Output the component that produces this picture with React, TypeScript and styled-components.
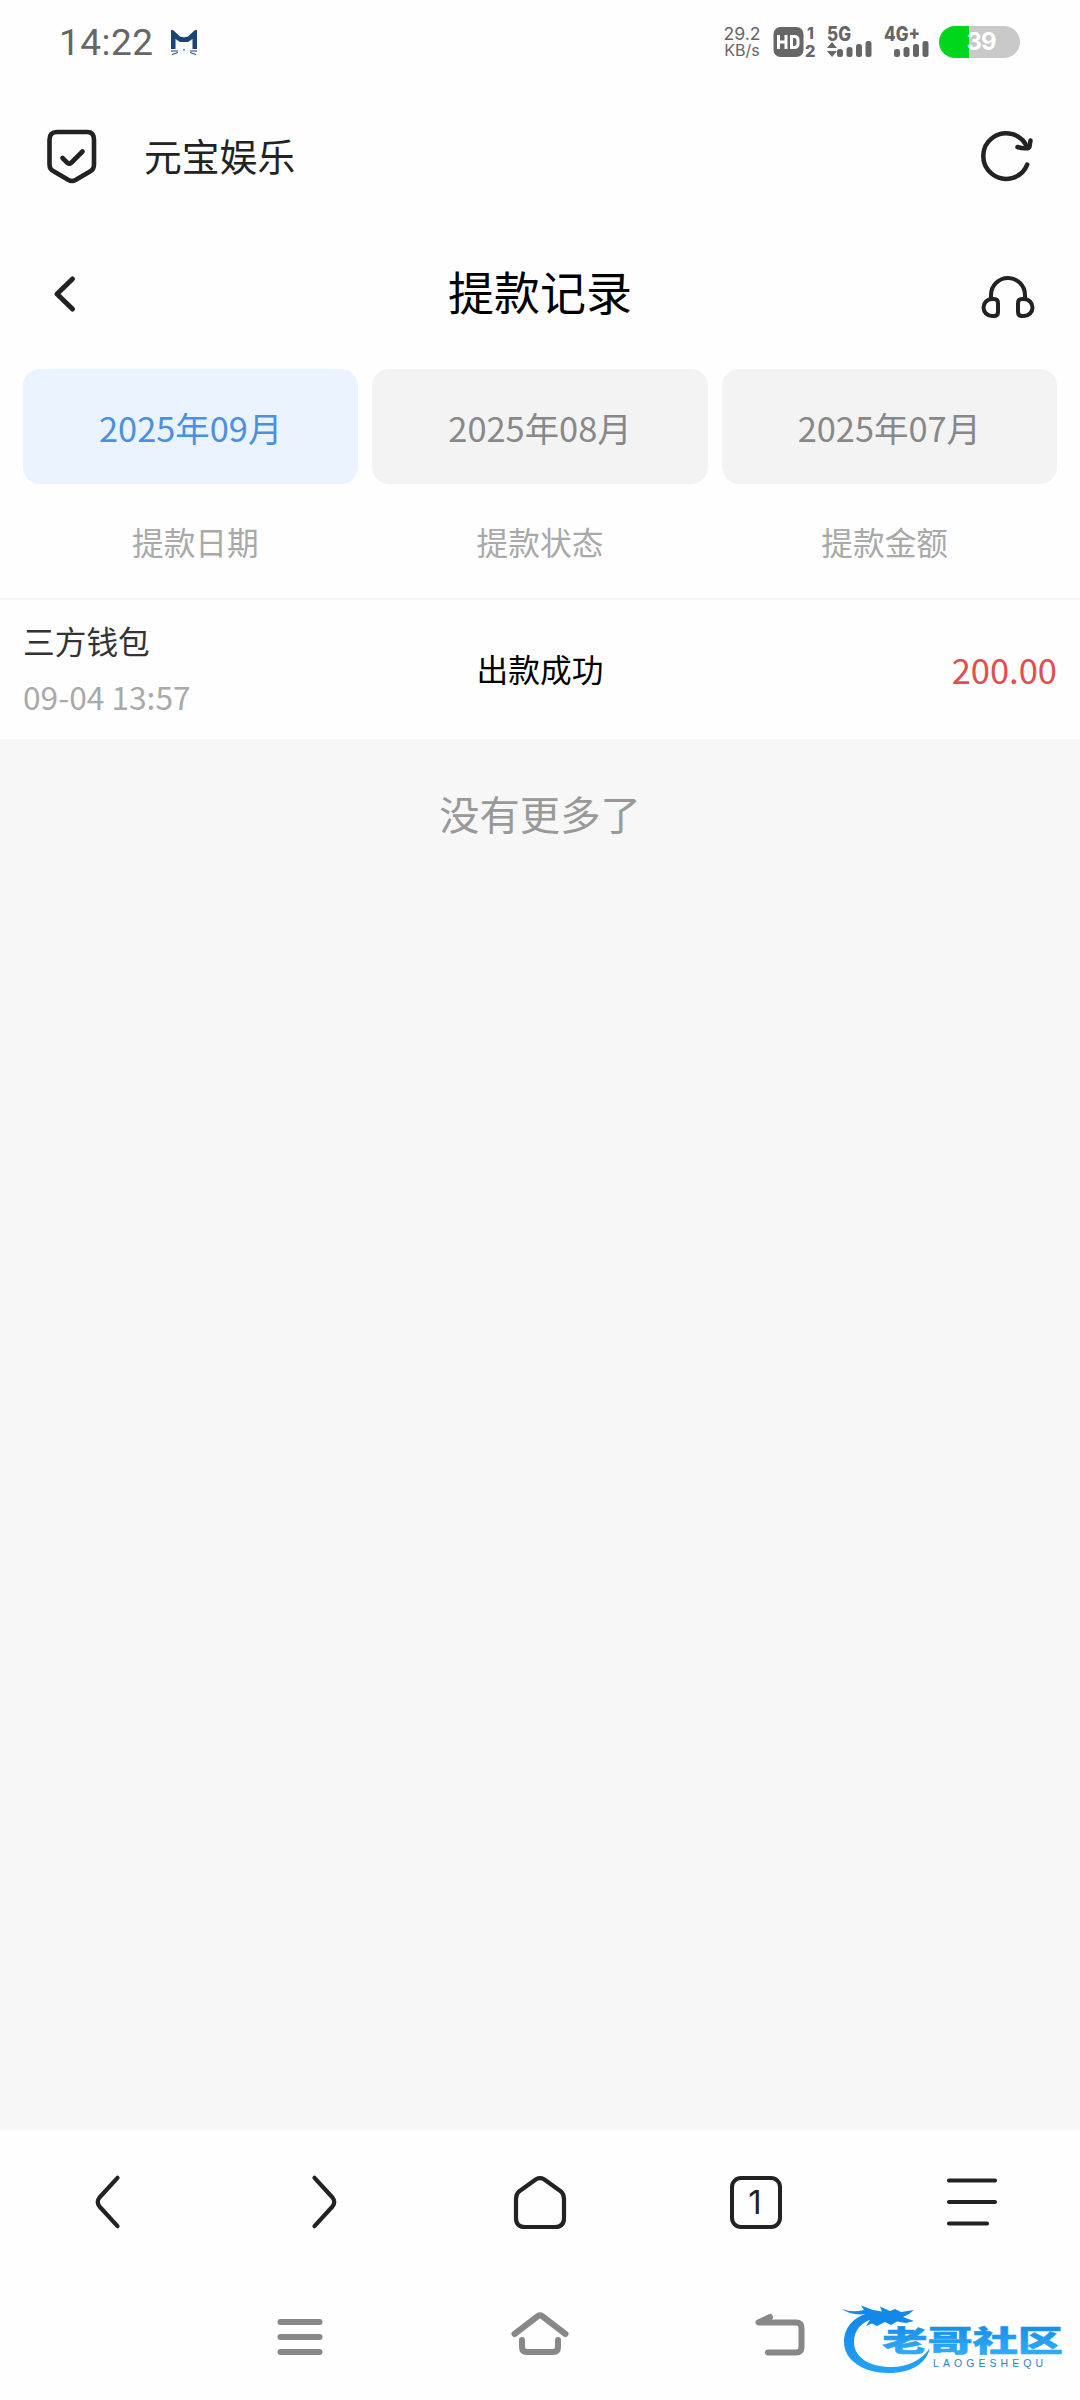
import React from 'react';
import styled, { createGlobalStyle } from 'styled-components';

const Global = createGlobalStyle`
  * { box-sizing: border-box; }
  body { margin: 0; background: #fff; }
`;

const Screen = styled.div`
  width: 1080px;
  height: 2400px;
  display: flex;
  flex-direction: column;
  overflow: hidden;
  background: #fefefe;
  font-family: "Noto Sans CJK SC", sans-serif;
  color: #222;
`;

const StatusBar = styled.header`
  height: 84px;
  padding: 0 60px 0 59px;
  display: flex;
  justify-content: space-between;
  font-family: Roboto, sans-serif;
  color: #666;
`;

const StatusGroup = styled.div`
  display: flex;
  align-items: center;
  height: 84px;
`;

const Clock = styled.span`
  font-size: 37px;
  line-height: 40px;
  letter-spacing: 0.5px;
  padding-top: 2px;
  margin-right: 16px;
`;

const Speed = styled.div`
  display: flex;
  flex-direction: column;
  align-items: center;
  width: 38px;
  margin: 0 12px 0 0;
  font-family: Inter, sans-serif;
  font-size: 17.6px;
  line-height: 17px;
  white-space: nowrap;
`;

const SpeedUnit = styled.span`
  font-size: 16px;
`;

const BrowserBar = styled.div`
  height: 145px;
  padding: 0 45px 1px 45px;
  display: flex;
  align-items: center;
`;

const SiteName = styled.span`
  flex: 1;
  margin-left: 45px;
  padding-bottom: 3px;
  font-size: 37.8px;
  line-height: 48px;
`;

const PageHeader = styled.div`
  height: 140px;
  padding: 0 44px 12px 48px;
  display: grid;
  grid-template-columns: 1fr auto 1fr;
  align-items: center;
`;

const HeaderAction = styled.div<{ $end?: boolean }>`
  display: flex;
  justify-content: ${(p) => (p.$end ? 'flex-end' : 'flex-start')};
  padding-top: ${(p) => (p.$end ? '7px' : '2px')};
`;

const PageTitle = styled.h1`
  margin: 0;
  padding: 0 4px 7px 0;
  font-size: 46px;
  line-height: 60px;
  font-weight: 400;
  color: #000;
`;

const Months = styled.div`
  padding: 0 23px;
  display: grid;
  grid-template-columns: repeat(3, 1fr);
  gap: 14px;
`;

const Month = styled.button<{ $active?: boolean }>`
  height: 115px;
  padding: 1px 0 0;
  border: 0;
  border-radius: 17px;
  font: 34.4px "Noto Sans CJK SC", sans-serif;
  color: ${(p) => (p.$active ? '#4a90e2' : '#888')};
  background: ${(p) => (p.$active ? '#eaf3ff' : '#f3f3f3')};
`;

const Columns = styled.div`
  height: 116px;
  padding: 0 23px;
  display: grid;
  grid-template-columns: repeat(3, 1fr);
  align-items: center;
  text-align: center;
  font-size: 31.7px;
  color: #a9a9a9;
  border-bottom: 2px solid #f5f5f5;
`;

const Record = styled.div`
  height: 139px;
  padding: 0 23px 3px;
  display: grid;
  grid-template-columns: repeat(3, 1fr);
  align-items: center;
`;

const Source = styled.div`
  display: flex;
  flex-direction: column;
  font-size: 31.7px;
  line-height: 56px;
  color: #333;
`;

const When = styled.span`
  color: #a9a9a9;
`;

const State = styled.span`
  text-align: center;
  font-size: 31.7px;
  color: #000;
`;

const Amount = styled.span`
  padding-top: 2px;
  text-align: right;
  font-size: 34.5px;
  color: #e34d50;
`;

const Rest = styled.main`
  height: 1391px;
  padding-top: 44px;
  background: #f7f7f7;
  text-align: center;
  font-size: 40.3px;
  line-height: 60px;
  color: #999;
`;

const BottomBar = styled.nav`
  height: 144px;
  display: grid;
  grid-template-columns: repeat(5, 1fr);
  align-items: center;
  justify-items: center;
`;

const TabCount = styled.span`
  width: 52px;
  height: 53px;
  border: 4px solid #222;
  border-radius: 11px;
  display: flex;
  align-items: center;
  justify-content: center;
  padding-right: 2px;
  font: 33px/44px Inter, sans-serif;
`;

const SystemBar = styled.nav`
  position: relative;
  flex: 1;
  padding: 0 180px;
  display: grid;
  grid-template-columns: repeat(3, 1fr);
  align-items: center;
  justify-items: center;
`;

const Watermark = styled.div`
  position: absolute;
  left: 835px;
  top: 22px;
`;

const MailCat = () => (
  <svg width="28" height="28" viewBox="0 0 28 28">
    <path d="M1 2H3L10 8.500Q14 10 18 8.500L25 2H27V21H22.500V11L18 14H10L5.500 11V21H1Z" fill="#1b4474" />
    <path d="M1 23h7M2 26.500l6-2M27 23h-7M26 26.500l-6-2M13 22h2" stroke="#1b4474" strokeWidth="1" />
  </svg>
);

const StatusIcon = styled.svg<{ $gap: number }>`
  overflow: visible;
  margin-right: ${(p) => p.$gap}px;
  font-family: Inter, sans-serif;
  font-weight: 800;
  fill: #666;
`;

const HdIcon = () => (
  <StatusIcon $gap={10} width="44" height="32" viewBox="0 0 44 32">
    <rect x="0.500" y="1" width="30" height="30" rx="7" />
    <path d="M5.500 9v14M13 9v14M5.500 16h7.500M18.500 10.500h2.500q4 0 4 3.500v4q0 3.500-4 3.500h-2.500z" stroke="#fff" strokeWidth="3" fill="none" />
    <text x="34" y="12.500" fontSize="15.500">1</text>
    <text x="32" y="30.500" fontSize="16.500">2</text>
  </StatusIcon>
);

const Signal = ({ label, arrows, gap }: { label: string; arrows?: boolean; gap: number }) => (
  <StatusIcon $gap={gap} width="46" height="32" viewBox="0 0 46 32">
    <text x="0" y="15" fontSize="19.500" textLength={label.length > 2 ? 36 : 24} lengthAdjust="spacingAndGlyphs">{label}</text>
    {arrows && <path d="M0 22l5-6 5 6zM0 25l5 6 5-6z" />}
    <rect x="10" y="23" width="6" height="8" rx="2.500" />
    <rect x="19.500" y="21" width="6" height="10" rx="2.500" />
    <rect x="29" y="18" width="6" height="13" rx="2.500" />
    <rect x="38.500" y="15" width="6" height="16" rx="2.500" />
  </StatusIcon>
);

const Battery = styled.div`
  width: 81px;
  height: 32px;
  border-radius: 16px;
  background: linear-gradient(90deg, #00d61c 0 30px, #c9c9c9 30px);
  color: #fff;
  font: 700 24px/32px Inter, sans-serif;
  letter-spacing: -1px;
  padding-left: 3px;
  text-align: center;
`;

const Stroke = styled.svg<{ $w: number; $c?: string }>`
  fill: none;
  stroke: ${(p) => p.$c || '#222'};
  stroke-width: ${(p) => p.$w}px;
  stroke-linecap: round;
  stroke-linejoin: round;
`;

const Logo = () => (
  <svg width="230" height="80" viewBox="0 0 230 80">
    <defs>
      <linearGradient id="ring" x1="0" y1="0" x2="0" y2="1">
        <stop offset="0" stopColor="#1186e6" />
        <stop offset="1" stopColor="#22a4f8" />
      </linearGradient>
      <linearGradient id="word" x1="0" y1="0" x2="0" y2="1">
        <stop offset="0" stopColor="#1485e2" />
        <stop offset="1" stopColor="#35b4fb" />
      </linearGradient>
    </defs>
    <path d="M34 17C18 21 9 32 9 46C9 64 28 77 54 77C76 77 91 68 95 52C87 64 73 71 56 71C34 71 19 61 19 46C19 34 26 26 40 22Z" fill="url(#ring)" />
    <path d="M7 13Q17 17 29 14L26 9.500L38 14L47 15.500L45 10.500L55 15L60 13L66 16L79 14L74 18L68 21L79 25L71 27L62 25.500L56 29L50 26L42 30L37 27.500L31 30L35 24L28 23L32 18Q16 20 7 13Z" fill="#1289e8" />
    <text x="47" y="56.500" fontFamily="Noto Sans CJK SC" fontWeight="900" fontSize="29" textLength="136" lengthAdjust="spacingAndGlyphs" transform="translate(-15.300 0) scale(1.330 1)" fill="url(#word)" stroke="url(#word)" strokeWidth="0.500">老哥社区</text>
    <text x="98" y="71" fontFamily="Liberation Sans" fontSize="10.500" textLength="110" fill="#2d83c9">LAOGESHEQU</text>
  </svg>
);

export default function App() {
  return (
    <Screen>
      <Global />
      <StatusBar>
        <StatusGroup>
          <Clock>14:22</Clock>
          <MailCat />
        </StatusGroup>
        <StatusGroup>
          <Speed>
            <span>29.2</span>
            <SpeedUnit>KB/s</SpeedUnit>
          </Speed>
          <HdIcon />
          <Signal label="5G" arrows gap={11} />
          <Signal label="4G+" gap={9} />
          <Battery>39</Battery>
        </StatusGroup>
      </StatusBar>
      <BrowserBar>
        <Stroke $w={4.6} width="54" height="58" viewBox="0 0 54 58">
          <path d="M12 5H42Q49 5 49 12.500V37.500Q49 42.500 45 44.500L30.500 53Q27 55 23.500 53L9 44.500Q4.500 42.500 4.500 37.500V12.500Q4.500 5 12 5Z" />
          <path d="M17.500 31L22.500 36Q24.500 37.500 26.500 35.500L37.500 24.500" />
        </Stroke>
        <SiteName>元宝娱乐</SiteName>
        <Stroke $w={4.5} width="58" height="58" viewBox="0 0 58 58">
          <path d="M50.200 37.600A22.800 22.800 0 1 1 50.400 21" />
          <path d="M53.500 13.500L52.500 19.500Q52 21.500 49 21.300Q45 21.500 40.500 20" />
        </Stroke>
      </BrowserBar>
      <PageHeader>
        <HeaderAction>
          <Stroke $w={5} width="30" height="40" viewBox="0 0 30 40">
            <path d="M24.500 5L9 20L24.500 35" />
          </Stroke>
        </HeaderAction>
        <PageTitle>提款记录</PageTitle>
        <HeaderAction $end>
          <Stroke $w={4} width="58" height="48" viewBox="0 0 58 48">
            <path d="M13 26V22A17 17 0 0 1 47 22V26" />
            <path d="M14 26H16Q20 26 20 30V39Q20 43 16 43H14A8.500 8.500 0 0 1 14 26Z" />
            <path d="M46 26H44Q40 26 40 30V39Q40 43 44 43H46A8.500 8.500 0 0 0 46 26Z" />
          </Stroke>
        </HeaderAction>
      </PageHeader>
      <Months>
        <Month $active>2025年09月</Month>
        <Month>2025年08月</Month>
        <Month>2025年07月</Month>
      </Months>
      <Columns>
        <span>提款日期</span>
        <span>提款状态</span>
        <span>提款金额</span>
      </Columns>
      <Record>
        <Source>
          <span>三方钱包</span>
          <When>09-04 13:57</When>
        </Source>
        <State>出款成功</State>
        <Amount>200.00</Amount>
      </Record>
      <Rest>没有更多了</Rest>
      <BottomBar>
        <Stroke $w={4.2} width="30" height="58" viewBox="0 0 30 58">
          <path d="M24.500 4.800L6.500 24.500Q3 29 6.500 33.500L24.500 53.200" />
        </Stroke>
        <Stroke $w={4.2} width="30" height="58" viewBox="0 0 30 58">
          <path d="M5.500 4.800L23.500 24.500Q27 29 23.500 33.500L5.500 53.200" />
        </Stroke>
        <Stroke $w={4.2} width="58" height="58" viewBox="0 0 58 58">
          <path d="M25 6.300Q29 4 33 6.300L50 18.500Q53 21 53 26V45Q53 54 44 54H14Q5 54 5 45V26Q5 21 8 18.500Z" />
        </Stroke>
        <TabCount>1</TabCount>
        <Stroke $w={4.2} width="54" height="50" viewBox="0 0 54 50">
          <path d="M4 3.500H50M4 25H50M4 46.500H42" />
        </Stroke>
      </BottomBar>
      <SystemBar>
        <Stroke $w={6} $c="#888" width="46" height="40" viewBox="0 0 46 40">
          <path d="M3.500 5H42.500M3.500 20H42.500M3.500 35H42.500" />
        </Stroke>
        <Stroke $w={6} $c="#888" width="60" height="50" viewBox="0 0 60 50">
          <path d="M4.500 22L28 4Q30 2.500 32 4L55.500 22" />
          <path d="M12 28V35Q12 40 17 40H43Q48 40 48 35V28" />
        </Stroke>
        <Stroke $w={6} $c="#888" width="52" height="48" viewBox="0 0 52 48">
          <path d="M16 4L4.500 9.500H42Q47.500 9.500 47.500 15V34Q47.500 39.500 42 39.500H14" />
        </Stroke>
        <Watermark><Logo /></Watermark>
      </SystemBar>
    </Screen>
  );
}
